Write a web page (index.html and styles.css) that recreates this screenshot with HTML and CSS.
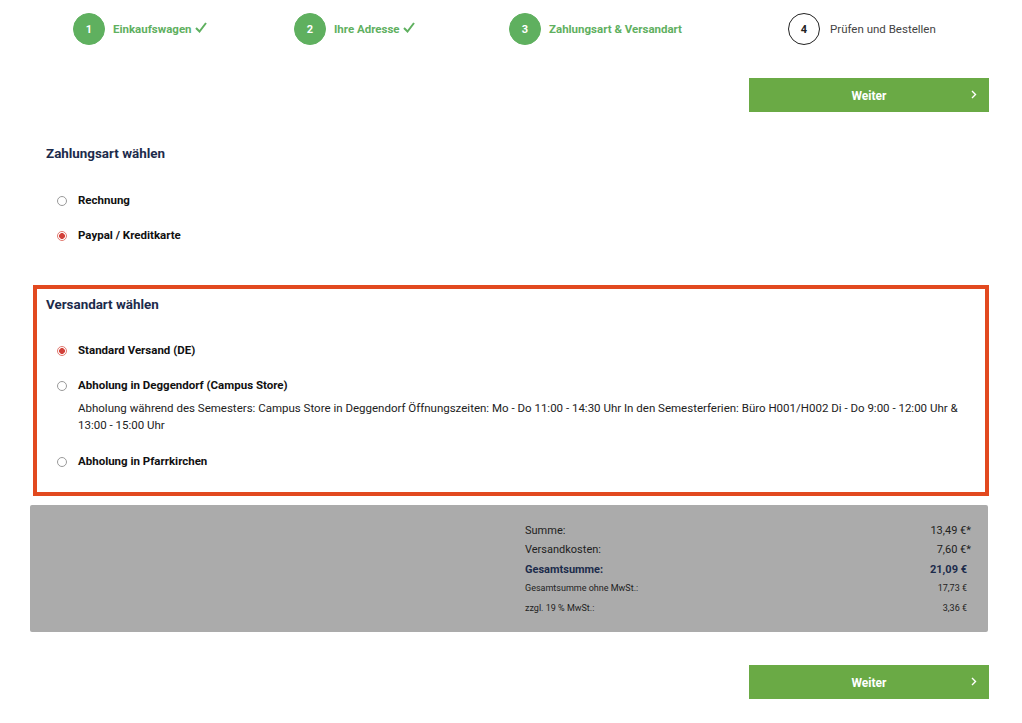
FILE: index.html
```html
<!DOCTYPE html>
<html lang="de">
<head>
	<meta charset="utf-8">
	<title>Checkout - Zahlungsart &amp; Versandart</title>
	<meta name="viewport" content="width=device-width, initial-scale=1.0">
	<link rel="stylesheet" href="styles.css">
</head>
<body>
<div class="wrapper">
	<ol class="steps">
		<li class="step done step1">
			<span class="step_num">1</span>
			<span class="step_label">Einkaufswagen</span>
			<svg class="check" width="12" height="11" viewBox="0 0 12 11"><polyline points="1,6 4.5,9.5 11,1" fill="none" stroke="#5fb05f" stroke-width="2"/></svg>
		</li>
		<li class="step done step2">
			<span class="step_num">2</span>
			<span class="step_label">Ihre Adresse</span>
			<svg class="check" width="12" height="11" viewBox="0 0 12 11"><polyline points="1,6 4.5,9.5 11,1" fill="none" stroke="#5fb05f" stroke-width="2"/></svg>
		</li>
		<li class="step active step3">
			<span class="step_num">3</span>
			<span class="step_label">Zahlungsart &amp; Versandart</span>
		</li>
		<li class="step step4">
			<span class="step_num">4</span>
			<span class="step_label">Prüfen und Bestellen</span>
		</li>
	</ol>

	<div class="actions">
		<a href="" class="btn_next">Weiter
			<svg class="chev" width="6" height="9" viewBox="0 0 6 9"><polyline points="1,1 4.5,4.5 1,8" fill="none" stroke="#fff" stroke-width="1.4"/></svg>
		</a>
	</div>

	<form class="checkout">
		<div class="panel">
			<h3>Zahlungsart wählen</h3>
			<ul class="options">
				<li><label><input type="radio" name="payment"> Rechnung</label></li>
				<li><label><input type="radio" name="payment" checked> Paypal / Kreditkarte</label></li>
			</ul>
		</div>

		<div class="panel highlight">
			<h3>Versandart wählen</h3>
			<ul class="options">
				<li><label><input type="radio" name="shipping" checked> Standard Versand (DE)</label></li>
				<li>
					<label><input type="radio" name="shipping"> Abholung in Deggendorf (Campus Store)</label>
					<p class="desc">Abholung während des Semesters: Campus Store in Deggendorf Öffnungszeiten: Mo - Do 11:00 - 14:30 Uhr In den Semesterferien: Büro H001/H002 Di - Do 9:00 - 12:00 Uhr &amp; 13:00 - 15:00 Uhr</p>
				</li>
				<li><label><input type="radio" name="shipping"> Abholung in Pfarrkirchen</label></li>
			</ul>
		</div>
	</form>

	<div class="summary">
		<div></div>
		<dl class="totals">
			<dt>Summe:</dt><dd>13,49 €<span class="star">*</span></dd>
			<dt>Versandkosten:</dt><dd>7,60 €<span class="star">*</span></dd>
			<dt class="total">Gesamtsumme:</dt><dd class="total">21,09 €</dd>
			<dt class="small">Gesamtsumme ohne MwSt.:</dt><dd class="small">17,73 €</dd>
			<dt class="small">zzgl. 19 % MwSt.:</dt><dd class="small">3,36 €</dd>
		</dl>
	</div>

	<div class="actions bottom">
		<a href="" class="btn_next">Weiter
			<svg class="chev" width="6" height="9" viewBox="0 0 6 9"><polyline points="1,1 4.5,4.5 1,8" fill="none" stroke="#fff" stroke-width="1.4"/></svg>
		</a>
	</div>
</div>
</body>
</html>
```

FILE: styles.css
```css
body, h1, h2, h3, h4, h5, h6, ol, ul, p, dl, dd {
	margin: 0;
	padding: 0;
}
ol, ul {
	list-style: none;
}
a {
	text-decoration: none;
}
body {
	font-family: Roboto, "Liberation Sans", sans-serif;
	color: #222;
	background: #fff;
}
.wrapper {
	width: 1022px;
}

/* steps */
.steps {
	display: flex;
	align-items: center;
	height: 58px;
	padding-left: 73px;
}
.step {
	display: flex;
	align-items: center;
	font-size: 11.5px;
	color: #444;
}
.step1 {
	width: 221px;
}
.step2 {
	width: 215px;
}
.step3 {
	width: 279px;
}
.step_num {
	display: flex;
	align-items: center;
	justify-content: center;
	width: 30px;
	height: 30px;
	margin-right: 8px;
	border: 1px solid #222;
	border-radius: 50%;
	font-weight: 700;
	font-size: 11px;
	color: #222;
}
.step4 .step_num {
	margin-right: 10px;
}
.step.done .step_num, .step.active .step_num {
	background: #5fb05f;
	border-color: #5fb05f;
	color: #fff;
}
.step.done .step_label, .step.active .step_label {
	color: #5fb05f;
	font-weight: 700;
}
.check {
	margin-left: 3px;
	margin-top: -4px;
}

/* buttons */
.actions {
	display: flex;
	justify-content: flex-end;
	padding-right: 33px;
	margin-top: 20px;
}
.actions.bottom {
	margin-top: 33px;
}
.btn_next {
	position: relative;
	display: block;
	width: 240px;
	height: 34px;
	line-height: 37px;
	background: #6aaa45;
	color: #fff;
	font-size: 12px;
	font-weight: 700;
	text-align: center;
}
.btn_next .chev {
	position: absolute;
	right: 12px;
	top: 12px;
}

/* panels */
.checkout {
	margin-top: 24px;
}
.panel {
	margin: 0 33px;
	padding: 6px 9px 14px;
	border: 4px solid transparent;
}
.panel.highlight {
	margin-top: 14px;
	padding-top: 8px;
	padding-bottom: 13px;
	border-color: #e2491f;
}
.panel h3 {
	font-size: 13.4px;
	font-weight: 700;
	color: #1c2b4b;
	line-height: 16px;
}
.options {
	margin-top: 21px;
	padding-left: 11px;
}
.highlight .options {
	margin-top: 20px;
}
.options li {
	padding: 9px 0;
}
.options label {
	display: flex;
	align-items: center;
	font-size: 11.5px;
	font-weight: 700;
	color: #111;
	line-height: 17px;
}
.options input {
	appearance: none;
	-webkit-appearance: none;
	width: 10px;
	height: 10px;
	margin: 0 11px 0 0;
	border: 1px solid #9a9a9a;
	border-radius: 50%;
	background: #fff;
}
.options input:checked {
	border-color: #e27a70;
	background: radial-gradient(circle, #d2413a 0, #d2413a 2.6px, #fff 3.2px);
}
.desc {
	margin: 6px 0 1px 21px;
	font-size: 11.5px;
	line-height: 17px;
	color: #222;
}

/* summary */
.summary {
	display: grid;
	grid-template-columns: 1fr 1fr;
	margin: 9px 34px 0 30px;
	height: 127px;
	background: #ababab;
	border-radius: 2px;
}
.totals {
	display: grid;
	grid-template-columns: 1fr auto;
	align-content: start;
	padding: 16px 21px 0 16px;
	font-size: 11px;
	color: #222;
}
.totals dt, .totals dd {
	line-height: 19.4px;
}
.totals dd {
	text-align: right;
	white-space: nowrap;
}
.totals .star {
	margin-right: -4px;
}
.totals .total {
	font-weight: 700;
	color: #1c2b4b;
}
.totals .small {
	font-size: 9px;
}
```
